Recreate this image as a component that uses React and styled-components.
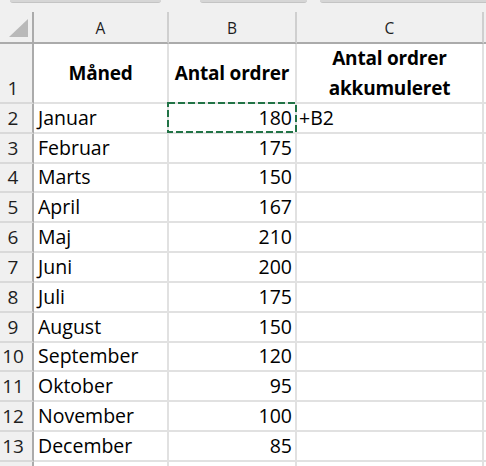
import React from 'react';
import styled, {createGlobalStyle} from 'styled-components';

const FONT = '"Open Sans", "Liberation Sans", sans-serif';
const GRID = '#e1e1e1';
const HEAD_BG = '#f0f0f0';
const HEAD_LINE = '#ababab';
const GREEN = '#217346';

const ROW_H = 358 / 12;

const months = [
    ['Januar', 180],
    ['Februar', 175],
    ['Marts', 150],
    ['April', 167],
    ['Maj', 210],
    ['Juni', 200],
    ['Juli', 175],
    ['August', 150],
    ['September', 120],
    ['Oktober', 95],
    ['November', 100],
    ['December', 85],
];

const GlobalStyle = createGlobalStyle`
    html, body {
        margin: 0;
        padding: 0;
        background: #fff;
        overflow: hidden;
    }
    body {
        font-family: ${FONT};
        color: #000;
    }
`;

const Window = styled.div`
    width: 486px;
    height: 466px;
    overflow: hidden;
    background: #fff;
`;

const TopStrip = styled.div`
    height: 12px;
    background: ${HEAD_BG};
    display: flex;
    align-items: flex-start;
`;

const BoxEdge = styled.div`
    flex: 0 0 ${props => props.width}px;
    margin-left: ${props => props.gap}px;
    height: 2px;
    border-radius: 0 0 4px 4px;
    background: #d6d6d6;
    border-bottom: 1px solid #c4c4c4;
`;

const Sheet = styled.div`
    display: grid;
    grid-template-columns: 34px 135px 128px 187px 40px;
    grid-template-rows: 32px 60px repeat(12, ${ROW_H}px) 30px;
`;

const Corner = styled.div`
    background: ${HEAD_BG};
    border-right: 2px solid ${HEAD_LINE};
    border-bottom: 2px solid ${HEAD_LINE};
    box-sizing: border-box;
    display: flex;
    align-items: flex-end;
    justify-content: flex-end;
    padding: 0 4px 5px 0;
`;

const Triangle = styled.div`
    width: 19px;
    height: 18px;
    background: #b9b9b9;
    clip-path: polygon(100% 0, 100% 100%, 0 100%);
`;

const ColHead = styled.div`
    background: ${HEAD_BG};
    border-bottom: 2px solid ${HEAD_LINE};
    border-right: ${props => props.last ? 'none' : '2px solid #cfcfcf'};
    box-sizing: border-box;
    display: flex;
    align-items: center;
    justify-content: center;
    font-size: 15.5px;
    color: #1e1e1e;
    padding-top: 1px;
`;

const RowHead = styled.div`
    background: ${HEAD_BG};
    border-right: 2px solid ${HEAD_LINE};
    border-bottom: 2px solid #d9d9d9;
    box-sizing: border-box;
    display: flex;
    align-items: flex-end;
    justify-content: center;
    padding: 0 6px 2px 0;
    font-size: 19px;
    line-height: 24px;
    color: #1e1e1e;
`;

const Cell = styled.div`
    position: relative;
    border-right: 2px solid ${GRID};
    border-bottom: 2px solid ${GRID};
    box-sizing: border-box;
    display: flex;
    align-items: flex-end;
    justify-content: ${props => props.align === 'right'
        ? 'flex-end'
        : props.align === 'center' ? 'center' : 'flex-start'};
    text-align: ${props => props.align || 'left'};
    padding: 0 3px 1px 4px;
    font-size: 19.5px;
    line-height: 26px;
    font-weight: ${props => props.bold ? 700 : 400};
    letter-spacing: ${props => props.bold ? '-0.2px' : '0'};
    white-space: nowrap;
    overflow: visible;
    z-index: ${props => props.over ? 2 : 'auto'};
`;

const HeaderCell = styled(Cell)`
    align-items: center;
    padding: 0 2px 1px 2px;
    line-height: 30px;
    font-size: 19px;
    white-space: normal;
`;

const Formula = styled.span`
    margin-left: -2px;
`;

const Ants = styled.svg`
    position: absolute;
    left: -2px;
    top: -2px;
    width: 130px;
    height: 31px;
    pointer-events: none;
`;

const CopyMarquee = () => (
    <Ants viewBox="0 0 130 31">
        <rect x="1" y="1" width="128" height="29" fill="none"
              stroke={GREEN} strokeWidth="2" strokeDasharray="7 3"/>
    </Ants>
);

export default function App() {
    return (
        <Window>
            <GlobalStyle/>
            <TopStrip>
                <BoxEdge gap={10} width={151}/>
                <BoxEdge gap={39} width={107}/>
                <BoxEdge gap={13} width={170}/>
            </TopStrip>
            <Sheet>
                <Corner><Triangle/></Corner>
                <ColHead>A</ColHead>
                <ColHead>B</ColHead>
                <ColHead>C</ColHead>
                <ColHead last/>

                <RowHead>1</RowHead>
                <HeaderCell bold align="center">Måned</HeaderCell>
                <HeaderCell bold align="center">Antal ordrer</HeaderCell>
                <HeaderCell bold align="center">Antal ordrer<br/>akkumuleret</HeaderCell>
                <Cell/>

                {months.map(([name, count], idx) => (
                    <React.Fragment key={name}>
                        <RowHead>{idx + 2}</RowHead>
                        <Cell>{name}</Cell>
                        <Cell align="right" over={idx === 0}>
                            {count}
                            {idx === 0 && <CopyMarquee/>}
                        </Cell>
                        <Cell>{idx === 0 && <Formula>+B2</Formula>}</Cell>
                        <Cell/>
                    </React.Fragment>
                ))}

                <RowHead/>
                <Cell/>
                <Cell/>
                <Cell/>
                <Cell/>
            </Sheet>
        </Window>
    );
}
